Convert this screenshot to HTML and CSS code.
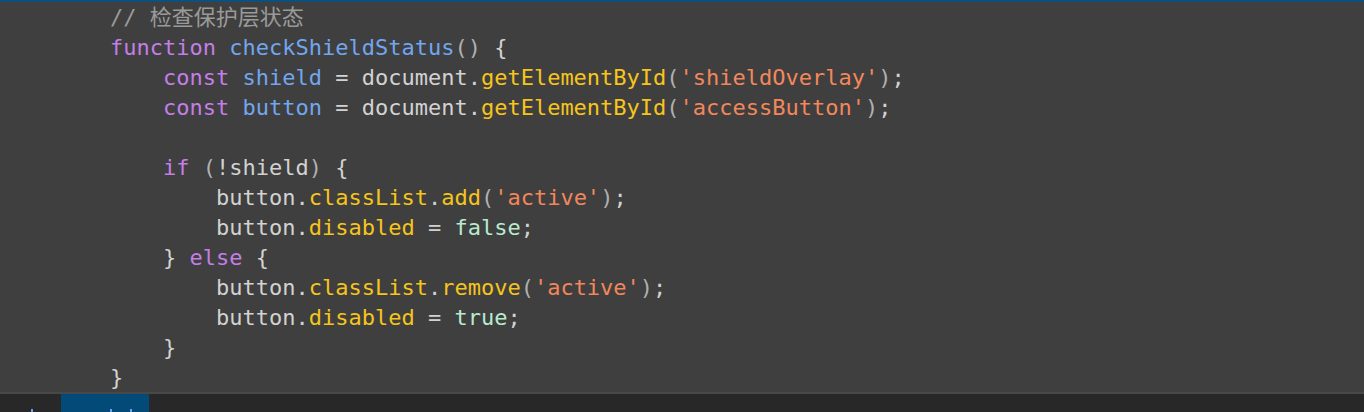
FILE: index.html
```html
<!DOCTYPE html>
<html>
<head>
<meta charset="utf-8">
<link rel="stylesheet" href="styles.css">
</head>
<body>
<div class="topbar"></div>
<div class="editor">
<div class="line"><span class="cm">// 检查保护层状态</span></div>
<div class="line"><span class="kw">function</span> <span class="fn">checkShieldStatus</span><span class="pn">()</span> {</div>
<div class="line">    <span class="kw">const</span> <span class="fn">shield</span> = document.<span class="me">getElementById</span><span class="pn">(</span><span class="st">'shieldOverlay'</span><span class="pn">)</span>;</div>
<div class="line">    <span class="kw">const</span> <span class="fn">button</span> = document.<span class="me">getElementById</span><span class="pn">(</span><span class="st">'accessButton'</span><span class="pn">)</span>;</div>
<div class="line"> </div>
<div class="line">    <span class="kw">if</span> <span class="pn">(</span>!shield<span class="pn">)</span> {</div>
<div class="line">        button.<span class="me">classList</span>.<span class="me">add</span><span class="pn">(</span><span class="st">'active'</span><span class="pn">)</span>;</div>
<div class="line">        button.<span class="me">disabled</span> = <span class="bo">false</span>;</div>
<div class="line">    } <span class="kw">else</span> {</div>
<div class="line">        button.<span class="me">classList</span>.<span class="me">remove</span><span class="pn">(</span><span class="st">'active'</span><span class="pn">)</span>;</div>
<div class="line">        button.<span class="me">disabled</span> = <span class="bo">true</span>;</div>
<div class="line">    }</div>
<div class="line">}</div>
</div>
<div class="divider"></div>
<div class="panel">
  <div class="tab-plain"><span class="dot"></span></div>
  <div class="tab-active"><span class="dot"></span><span class="dot"></span></div>
</div>
</body>
</html>
```

FILE: styles.css
```css
html, body {
  margin: 0;
  padding: 0;
}
body {
  width: 1364px;
  height: 412px;
  overflow: hidden;
  background: #3f3f3f;
  font-family: "DejaVu Sans Mono", "Noto Sans CJK SC", monospace;
}
.topbar {
  height: 2px;
  background: #0d4f7d;
}
.editor {
  height: 389px;
  padding-top: 1px;
  overflow: hidden;
}
.line {
  height: 30px;
  line-height: 30px;
  font-size: 22px;
  white-space: pre;
  padding-left: 110px;
  color: #d2d2d2;
}
.cm { color: #9a9a9a; }
.kw { color: #c47ee6; }
.fn { color: #72a6ee; }
.me { color: #f6c51c; }
.st { color: #f2875c; }
.pn { color: #b0b0b0; }
.bo { color: #b9ead0; }
.divider {
  height: 2px;
  background: #484848;
}
.panel {
  height: 18px;
  background: #282828;
  display: flex;
  overflow: hidden;
}
.tab-plain {
  width: 61px;
  padding-left: 31px;
  box-sizing: border-box;
  display: flex;
  align-items: flex-end;
}
.tab-active {
  width: 88px;
  background: #034a78;
  padding-left: 49px;
  box-sizing: border-box;
  display: flex;
  align-items: flex-end;
  gap: 18px;
}
.dot {
  width: 2px;
  height: 3px;
  background: #6ea2e8;
}
```
